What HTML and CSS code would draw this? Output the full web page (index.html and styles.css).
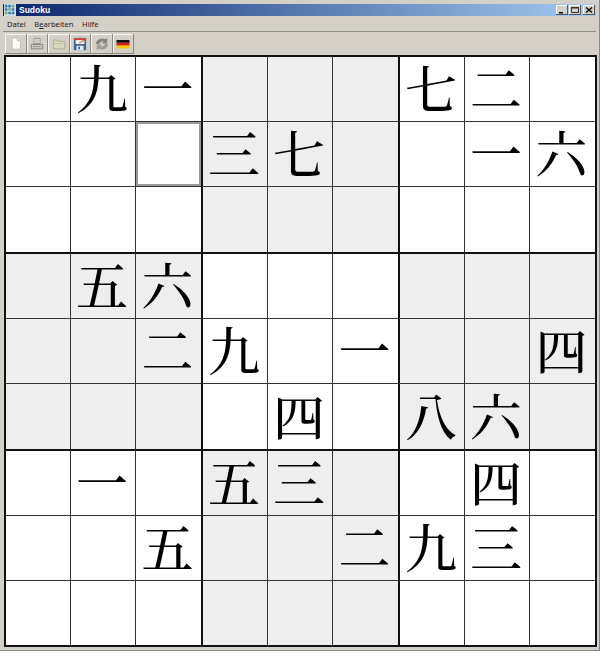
FILE: index.html
```html
<!DOCTYPE html>
<html lang="de">
<head>
<meta charset="utf-8">
<title>Sudoku</title>
<link rel="stylesheet" href="styles.css">
</head>
<body>
<div class="window">
  <div class="titlebar">
    <svg class="appicon" width="12" height="12" viewBox="0 0 14 14"><rect width="14" height="14" fill="#cfe0f0"/><path d="M1 1h3v3H1zM5 1h3v3H5zM1 5h3v3H1zM9 5h3v3H9zM5 9h3v3H5zM9 9h3v3H9z" fill="#2f78b8"/><path d="M9 1h3v3H9zM5 5h3v3H5zM1 9h3v3H1z" fill="#7fa95a"/></svg>
    <span class="title">Sudoku</span>
    <div class="controls">
      <span class="ctl"><svg width="12" height="10" viewBox="0 0 12 10"><rect x="3" y="7" width="4" height="1.500" fill="#000"/></svg></span>
      <span class="ctl"><svg width="12" height="10" viewBox="0 0 12 10"><path d="M2.500 2.500h7v5h-7z" fill="none" stroke="#333"/><path d="M2 2h8v1.500H2z" fill="#333"/></svg></span>
      <span class="ctl ctl-close"><svg width="12" height="10" viewBox="0 0 12 10"><path d="M3 2.500l6 5M9 2.500l-6 5" stroke="#000" stroke-width="1.500"/></svg></span>
    </div>
  </div>
  <div class="menubar">
    <span class="menu">Datei</span>
    <span class="menu">B<u>e</u>arbeiten</span>
    <span class="menu">Hilfe</span>
  </div>
  <div class="toolbar">
    <span class="tool"><svg width="14" height="15" viewBox="0 0 16 16"><path d="M3.500 1.500h6l3.500 3.500v9.500h-9.500z" fill="#fcfcf8" stroke="#b8b8b0"/><path d="M9.500 1.500v3.500h3.500" fill="#e4e4dc" stroke="#b8b8b0"/></svg></span>
    <span class="tool"><svg width="14" height="14" viewBox="0 0 16 16"><path d="M4.500 1.500h7v6h-7z" fill="#e8e8e2" stroke="#8a8a86"/><path d="M1.500 8.500h13v5h-13z" fill="#d0d0ca" stroke="#7c7c78"/><path d="M3 11h10" stroke="#8a8a86"/><path d="M6 3.500h4M6 5.500h4" stroke="#a8a8a4"/></svg></span>
    <span class="tool"><svg width="14" height="14" viewBox="0 0 16 16"><path d="M1.500 3.500h5l1 1.500h7v8.500h-13z" fill="#d8d8bc" stroke="#a8a88c"/><path d="M3 7.500h10" stroke="#c0c0a4"/></svg></span>
    <span class="tool"><svg width="14" height="14" viewBox="0 0 16 16"><rect x="1" y="1" width="14" height="14" fill="#3a6a9c"/><rect x="3" y="2" width="10" height="6" fill="#f4f0ee"/><path d="M1 2.500h14" stroke="#d8402c" stroke-width="2"/><path d="M7 7l6-3.500" stroke="#e0703a" stroke-width="1.300"/><rect x="4" y="10" width="8" height="5" fill="#ecece8"/><rect x="6" y="11" width="2" height="3" fill="#3a6a9c"/></svg></span>
    <span class="tool"><svg width="14" height="14" viewBox="0 0 16 16"><path d="M1 8a7 6.500 0 0 1 10.500-5.500L14 1v6.500H8l2-2A3.500 3 0 0 0 5 8z" fill="#85857f"/><path d="M15 8a7 6.500 0 0 1-10.500 5.500L2 15V8.500h6l-2 2a3.500 3 0 0 0 5-2.500z" fill="#9c9c96"/></svg></span>
    <span class="tool"><svg width="14" height="10" viewBox="0 0 14 10"><rect x="0.500" y="1" width="13" height="2.800" fill="#111"/><rect x="0.500" y="3.800" width="13" height="2.800" fill="#d81e10"/><rect x="0.500" y="6.600" width="13" height="2.800" fill="#f8c800"/></svg></span>
  </div>
  <div class="board">
    <div class="cell"></div><div class="cell">九</div><div class="cell">一</div><div class="cell shade"></div><div class="cell shade"></div><div class="cell shade"></div><div class="cell">七</div><div class="cell">二</div><div class="cell"></div>
    <div class="cell"></div><div class="cell"></div><div class="cell selected"></div><div class="cell shade">三</div><div class="cell shade">七</div><div class="cell shade"></div><div class="cell"></div><div class="cell">一</div><div class="cell">六</div>
    <div class="cell"></div><div class="cell"></div><div class="cell"></div><div class="cell shade"></div><div class="cell shade"></div><div class="cell shade"></div><div class="cell"></div><div class="cell"></div><div class="cell"></div>
    <div class="cell shade"></div><div class="cell shade">五</div><div class="cell shade">六</div><div class="cell"></div><div class="cell"></div><div class="cell"></div><div class="cell shade"></div><div class="cell shade"></div><div class="cell shade"></div>
    <div class="cell shade"></div><div class="cell shade"></div><div class="cell shade">二</div><div class="cell">九</div><div class="cell"></div><div class="cell">一</div><div class="cell shade"></div><div class="cell shade"></div><div class="cell shade">四</div>
    <div class="cell shade"></div><div class="cell shade"></div><div class="cell shade"></div><div class="cell"></div><div class="cell">四</div><div class="cell"></div><div class="cell shade">八</div><div class="cell shade">六</div><div class="cell shade"></div>
    <div class="cell"></div><div class="cell">一</div><div class="cell"></div><div class="cell shade">五</div><div class="cell shade">三</div><div class="cell shade"></div><div class="cell"></div><div class="cell">四</div><div class="cell"></div>
    <div class="cell"></div><div class="cell"></div><div class="cell">五</div><div class="cell shade"></div><div class="cell shade"></div><div class="cell shade">二</div><div class="cell">九</div><div class="cell">三</div><div class="cell"></div>
    <div class="cell"></div><div class="cell"></div><div class="cell"></div><div class="cell shade"></div><div class="cell shade"></div><div class="cell shade"></div><div class="cell"></div><div class="cell"></div><div class="cell"></div>
  </div>
</div>
</body>
</html>
```
FILE: styles.css
```css
* { box-sizing: border-box; }
html, body { margin: 0; padding: 0; background: #fff; }
.window {
  width: 600px;
  height: 651px;
  background: #d4d0c8;
  border-right: 1px solid #888;
  border-bottom: 1px solid #888;
  display: flex;
  flex-direction: column;
  padding: 4px 3px 0 3px;
}
.titlebar {
  height: 12px;
  display: flex;
  align-items: center;
  gap: 3px;
  padding: 0 1px;
  background: linear-gradient(to right, #0a246a, #a6caf0);
  flex: none;
}
.appicon { flex: none; }
.title {
  font: bold 8.500px "Liberation Sans", sans-serif;
  color: #fff;
  flex: 1;
}
.controls { display: flex; align-items: center; gap: 1px; }
.ctl {
  width: 12px;
  height: 10px;
  background: #d4d0c8;
  box-shadow: inset -1px -1px #555, inset 1px 1px #fff;
  display: block;
}
.ctl svg { display: block; }
.ctl-close { margin-left: 1px; }
.menubar {
  height: 14px;
  margin-top: 1px;
  display: flex;
  align-items: center;
  padding-left: 4px;
  gap: 8.500px;
  font: 7.600px "Noto Sans", sans-serif;
  color: #222;
  flex: none;
}
.toolbar {
  height: 24px;
  flex: none;
  display: flex;
  align-items: center;
  padding-left: 2px;
  border-top: 1px solid #8e8e88;
}
.tool {
  width: 21.500px;
  height: 20px;
  display: flex;
  align-items: center;
  justify-content: center;
  box-shadow: inset -1px -1px #8a8a86, inset 1px 1px #f4f4f0;
}
.board {
  margin-left: 1px;
  width: 593px;
  height: 592px;
  display: grid;
  grid-template-columns: 66px 65px 66px 66px 65px 66px 66px 65px 1fr;
  grid-template-rows: 66px 65px 66px 66px 65px 66px 66px 65px 1fr;
  border-right: 2px solid #111;
  border-bottom: 2px solid #111;
  background: #fff;
  flex: none;
}
.cell {
  border-top: 1px solid #333;
  border-left: 1px solid #333;
  background: #fff;
  font-family: "Noto Serif CJK JP", "Noto Sans CJK JP", serif;
  font-weight: 500;
  font-size: 52px;
  line-height: 1;
  color: #000;
  display: flex;
  align-items: center;
  justify-content: center;
  padding: 0 2px 4px 0;
}
.cell:nth-child(3n+1) { border-left: 2px solid #111; }
.cell:nth-child(-n+9),
.cell:nth-child(n+28):nth-child(-n+36),
.cell:nth-child(n+55):nth-child(-n+63) { border-top: 2px solid #111; }
.shade { background: #eee; }
.selected { box-shadow: inset 2px 2px #9a9a9a, inset -2px -2px #9a9a9a; }
```
